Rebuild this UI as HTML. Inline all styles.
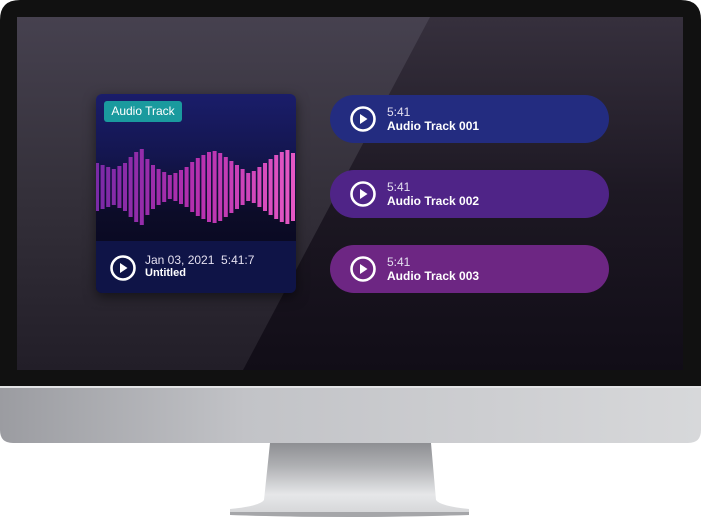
<!DOCTYPE html>
<html><head><meta charset="utf-8"><style>
body{margin:0;width:701px;height:520px;background:#fff;overflow:hidden;position:relative;font-family:"Liberation Sans",sans-serif}
.abs{position:absolute}
.pill{position:absolute;left:330px;width:279px;height:48px;border-radius:24px;color:#fff}
.t1{position:absolute;left:57px;top:10px;font-size:12px;color:#e4e0f0}
.t2{position:absolute;left:57px;top:24px;font-size:12px;font-weight:bold}
</style></head><body>
<svg class="abs" style="left:0;top:0" width="701" height="520">
<defs>
<linearGradient id="chin" x1="0" x2="1"><stop offset="0" stop-color="#9b9ca1"/><stop offset="0.35" stop-color="#c2c3c7"/><stop offset="1" stop-color="#d7d8da"/></linearGradient>
<linearGradient id="stand" x1="0" y1="0" x2="0" y2="1"><stop offset="0" stop-color="#8e8f93"/><stop offset="0.3" stop-color="#aeafb2"/><stop offset="0.7" stop-color="#e6e7e9"/><stop offset="1" stop-color="#d2d3d5"/></linearGradient>
<linearGradient id="scrR" x1="0" y1="0" x2="0" y2="1"><stop offset="0" stop-color="#36303d"/><stop offset="0.5" stop-color="#1d1823"/><stop offset="1" stop-color="#110d17"/></linearGradient>
<linearGradient id="scrL" x1="0" y1="0" x2="0" y2="1"><stop offset="0" stop-color="#46414f"/><stop offset="0.5" stop-color="#34303a"/><stop offset="1" stop-color="#221e28"/></linearGradient>
</defs>
<path d="M270 443 L431 443 L436 500 Q440 506 469 509 L469 515 Q350 519 230 515 L230 509 Q260 506 264 500 Z" fill="url(#stand)"/>
<path d="M230 512 L469 512 L469 515 Q350 519 230 515Z" fill="#a5a6a9"/>
<path d="M0 386 L701 386 L701 430 Q701 443 688 443 L13 443 Q0 443 0 430Z" fill="url(#chin)"/>
<rect x="0" y="386" width="701" height="2" fill="#e2e3e5"/>
<path d="M0 20 Q0 0 20 0 L681 0 Q701 0 701 20 L701 386 L0 386Z" fill="#111"/>
<rect x="17" y="17" width="666" height="353" fill="url(#scrR)"/>
<polygon points="17,17 430,17 243,370 17,370" fill="url(#scrL)"/>
</svg>

<div class="abs" style="left:96px;top:94px;width:200px;height:199px;border-radius:6px;overflow:hidden;background:linear-gradient(#1a1d6a 0%,#141650 30%,#0c0c28 60%,#07061a 100%);box-shadow:0 4px 12px rgba(0,0,0,.5)">
<div class="abs" style="left:0;top:147px;width:200px;height:52px;background:#0f1447"></div>
<div class="abs" style="left:8px;top:7px;width:78px;height:21px;border-radius:3px;background:#1a9a9e;color:#fff;font-size:12px;line-height:21px;text-align:center">Audio Track</div>
<svg class="abs" style="left:0;top:0" width="200" height="150">
<defs><linearGradient id="bar" gradientUnits="userSpaceOnUse" x1="0" y1="0" x2="200" y2="0"><stop offset="0" stop-color="#7a2aa6"/><stop offset="0.5" stop-color="#b52fae"/><stop offset="1" stop-color="#e659c4"/></linearGradient></defs>
<g fill="url(#bar)" id="bars"></g>
</svg>
<svg class="abs" style="left:14px;top:161px" width="26" height="26"><circle cx="13" cy="13" r="11.5" fill="none" stroke="#fff" stroke-width="2.6"/><path d="M10 8 L17.5 13 L10 18Z" fill="#fff"/></svg>
<div class="abs" style="left:49px;top:159px;font-size:12px;color:#e4e0f0;white-space:pre">Jan 03, 2021  5:41:7</div>
<div class="abs" style="left:49px;top:173px;font-size:11px;font-weight:bold;color:#fff">Untitled</div>
</div>

<div class="pill" style="top:95px;background:#232c80"><svg class="abs" style="left:20px;top:11px" width="26" height="26"><circle cx="13" cy="13" r="11.5" fill="none" stroke="#fff" stroke-width="2.6"/><path d="M10 8 L17.5 13 L10 18Z" fill="#fff"/></svg><div class="t1">5:41</div><div class="t2">Audio Track 001</div></div>
<div class="pill" style="top:170px;background:#4f2487"><svg class="abs" style="left:20px;top:11px" width="26" height="26"><circle cx="13" cy="13" r="11.5" fill="none" stroke="#fff" stroke-width="2.6"/><path d="M10 8 L17.5 13 L10 18Z" fill="#fff"/></svg><div class="t1">5:41</div><div class="t2">Audio Track 002</div></div>
<div class="pill" style="top:245px;background:#6d2683"><svg class="abs" style="left:20px;top:11px" width="26" height="26"><circle cx="13" cy="13" r="11.5" fill="none" stroke="#fff" stroke-width="2.6"/><path d="M10 8 L17.5 13 L10 18Z" fill="#fff"/></svg><div class="t1">5:41</div><div class="t2">Audio Track 003</div></div>

<script>
var h=[24,22,20,18,21,24,30,35,38,28,22,18,15,12,14,17,20,25,29,32,35,36,34,30,26,22,18,14,16,20,24,28,32,35,37,34];
var g=document.getElementById('bars'),s='';
for(var i=0;i<h.length;i++){var x=i*5.6-1;s+='<rect x="'+x+'" y="'+(93-h[i])+'" width="4" height="'+(2*h[i])+'"/>';}
g.innerHTML=s;
</script>
</body></html>
